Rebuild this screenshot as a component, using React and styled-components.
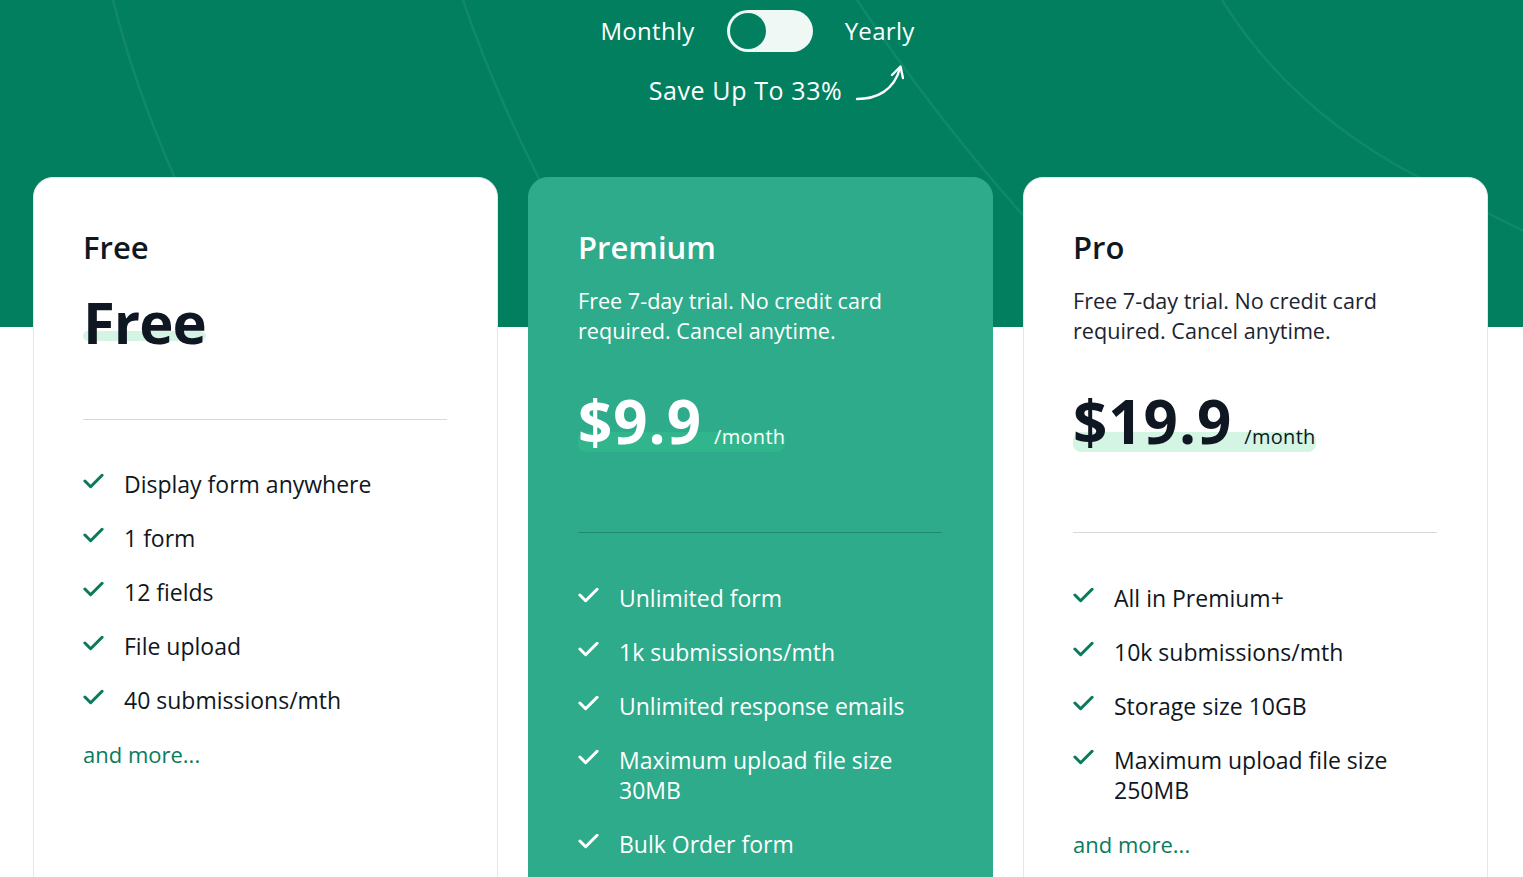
import React, { useState } from 'react';
import styled, { createGlobalStyle } from 'styled-components';

const GlobalStyle = createGlobalStyle`
  * { box-sizing: border-box; }
  html, body { margin: 0; padding: 0; }
  body {
    font-family: "Open Sans", "Liberation Sans", sans-serif;
    background: linear-gradient(to bottom, #017f5f 0, #017f5f 327px, #ffffff 327px);
    overflow: hidden;
  }
`;

const plans = [
  {
    name: 'Free',
    variant: 'light',
    price: 'Free',
    features: ['Display form anywhere', '1 form', '12 fields', 'File upload', '40 submissions/mth'],
    more: true,
  },
  {
    name: 'Premium',
    variant: 'featured',
    desc: 'Free 7-day trial. No credit card required. Cancel anytime.',
    price: '$9.9',
    period: '/month',
    features: [
      'Unlimited form',
      '1k submissions/mth',
      'Unlimited response emails',
      'Maximum upload file size 30MB',
      'Bulk Order form',
    ],
  },
  {
    name: 'Pro',
    variant: 'light',
    desc: 'Free 7-day trial. No credit card required. Cancel anytime.',
    price: '$19.9',
    period: '/month',
    features: ['All in Premium+', '10k submissions/mth', 'Storage size 10GB', 'Maximum upload file size 250MB'],
    more: true,
  },
];

const CheckIcon = ({ color }) => (
  <CheckSvg viewBox="0 0 22 16" fill="none">
    <polyline points="2,8 8,14 20,2" stroke={color} strokeWidth="3.2" strokeLinecap="round" strokeLinejoin="round" />
  </CheckSvg>
);

const CurvedArrow = () => (
  <ArrowSvg viewBox="0 0 50 42" fill="none">
    <path d="M3 37 C22 37 40 29 46 6" stroke="#fff" strokeWidth="2.4" strokeLinecap="round" />
    <path d="M38 13 L46.5 4.5 L49 16" stroke="#fff" strokeWidth="2.4" strokeLinecap="round" strokeLinejoin="round" />
  </ArrowSvg>
);

const BackgroundLines = () => (
  <LinesSvg viewBox="0 0 1523 327" preserveAspectRatio="none">
    <g stroke="rgba(255,255,255,0.07)" strokeWidth="2.5" fill="none">
      <path d="M113 0 Q150 150 250 327" />
      <path d="M463 0 Q510 140 620 327" />
      <path d="M857 0 Q930 110 1021 213 T1160 327" />
      <path d="M1222 0 Q1290 110 1420 178 T1530 232" />
    </g>
  </LinesSvg>
);

function App() {
  const [yearly, setYearly] = useState(false);

  return (
    <>
      <GlobalStyle />
      <Page>
        <BackgroundLines />
        <BillingRow>
          <BillingLabel>Monthly</BillingLabel>
          <Toggle $on={yearly} onClick={() => setYearly(!yearly)}>
            <Knob $on={yearly} />
          </Toggle>
          <BillingLabel>Yearly</BillingLabel>
        </BillingRow>
        <SaveRow>
          <SaveText>Save Up To 33%</SaveText>
          <CurvedArrow />
        </SaveRow>

        <Cards>
          {plans.map((plan) => {
            const featured = plan.variant === 'featured';
            const free = !plan.period;
            return (
              <Card key={plan.name} $featured={featured}>
                <PlanName $featured={featured}>{plan.name}</PlanName>
                {plan.desc && <PlanDesc $featured={featured}>{plan.desc}</PlanDesc>}
                <PriceRow $featured={featured} $free={free}>
                  <Price $featured={featured} $free={free}>{plan.price}</Price>
                  {plan.period && <Period $featured={featured}>{plan.period}</Period>}
                </PriceRow>
                <Divider $featured={featured} $free={free} />
                <FeatureList>
                  {plan.features.map((f) => (
                    <Feature key={f} $featured={featured}>
                      <CheckIcon color={featured ? '#ffffff' : '#0b7a5b'} />
                      <span>{f}</span>
                    </Feature>
                  ))}
                </FeatureList>
                {plan.more && <MoreLink href="#">and more...</MoreLink>}
              </Card>
            );
          })}
        </Cards>
      </Page>
    </>
  );
}

export default App;

const Page = styled.main`
  position: relative;
  width: 1523px;
  height: 877px;
  padding-top: 10px;
  overflow: hidden;
`;

const LinesSvg = styled.svg`
  position: absolute;
  left: 0;
  top: 0;
  width: 1523px;
  height: 327px;
  z-index: 0;
  pointer-events: none;
`;

const BillingRow = styled.div`
  position: relative;
  z-index: 1;
  display: flex;
  justify-content: center;
  align-items: center;
  gap: 32px;
  height: 42px;
  padding-right: 8px;
`;

const BillingLabel = styled.span`
  color: #ffffff;
  font-size: 24px;
  letter-spacing: 0.3px;
  line-height: 42px;
`;

const Toggle = styled.button`
  width: 86px;
  height: 42px;
  border: none;
  border-radius: 21px;
  background: #eff8f5;
  padding: 3px;
  display: flex;
  align-items: center;
  justify-content: ${(p) => (p.$on ? 'flex-end' : 'flex-start')};
  cursor: pointer;
`;

const Knob = styled.span`
  display: block;
  width: 36px;
  height: 36px;
  border-radius: 50%;
  background: #017f5f;
`;

const SaveRow = styled.div`
  position: relative;
  z-index: 1;
  display: flex;
  justify-content: center;
  align-items: flex-end;
  gap: 12px;
  margin-top: 3px;
  padding-left: 30px;
  height: 55px;
`;

const SaveText = styled.span`
  color: #ffffff;
  font-size: 25px;
  font-weight: 500;
  letter-spacing: 0.6px;
  line-height: 30px;
  margin-bottom: 5px;
`;

const ArrowSvg = styled.svg`
  width: 50px;
  height: 42px;
  margin-bottom: 6px;
`;

const Cards = styled.section`
  position: relative;
  z-index: 1;
  display: grid;
  grid-template-columns: repeat(3, 465px);
  gap: 30px;
  margin: 67px 0 0 33px;
`;

const Card = styled.article`
  background: ${(p) => (p.$featured ? '#2dab8a' : '#ffffff')};
  border: 1px solid ${(p) => (p.$featured ? '#2dab8a' : '#e4e6e8')};
  border-radius: 20px;
  padding: 49px 50px 60px 49px;
  min-height: 760px;
`;

const PlanName = styled.h2`
  margin: 0;
  font-size: 31px;
  line-height: 40px;
  font-weight: 600;
  color: ${(p) => (p.$featured ? '#ffffff' : '#0f1722')};
`;

const PlanDesc = styled.p`
  margin: 19px 0 0;
  font-size: 21.6px;
  line-height: 30px;
  color: ${(p) => (p.$featured ? '#ffffff' : '#1c2430')};
  max-width: 330px;
`;

const PriceRow = styled.div`
  position: relative;
  display: inline-flex;
  align-items: baseline;
  gap: 12px;
  margin-top: ${(p) => (p.$free ? '20px' : '40px')};

  &::before {
    content: '';
    position: absolute;
    left: 0;
    right: 0;
    bottom: ${(p) => (p.$free ? '16px' : '4px')};
    height: ${(p) => (p.$free ? '10px' : '20px')};
    border-radius: 8px;
    background: ${(p) => (p.$featured ? '#31b58d' : '#d4f5e3')};
    z-index: 0;
  }
`;

const Price = styled.span`
  position: relative;
  z-index: 1;
  font-size: ${(p) => (p.$free ? '58px' : '60px')};
  line-height: 70px;
  font-weight: 700;
  letter-spacing: ${(p) => (p.$free ? '-1px' : '1px')};
  color: ${(p) => (p.$featured ? '#ffffff' : '#0f1722')};
`;

const Period = styled.span`
  position: relative;
  z-index: 1;
  font-size: 20px;
  letter-spacing: 0.3px;
  color: ${(p) => (p.$featured ? '#ffffff' : '#0f1722')};
`;

const Divider = styled.hr`
  border: none;
  height: 1px;
  margin: ${(p) => (p.$free ? '62px 0 49px' : '76px 0 50px')};
  background: ${(p) => (p.$featured ? '#1f8a6c' : '#d6d8da')};
`;

const FeatureList = styled.ul`
  list-style: none;
  margin: 0;
  padding: 0;
  display: flex;
  flex-direction: column;
  gap: 24px;
`;

const Feature = styled.li`
  display: flex;
  align-items: flex-start;
  gap: 20px;
  font-size: 23px;
  line-height: 30px;
  color: ${(p) => (p.$featured ? '#ffffff' : '#0f1722')};
`;

const CheckSvg = styled.svg`
  flex: 0 0 21px;
  width: 21px;
  height: 16px;
  margin-top: 4px;
`;

const MoreLink = styled.a`
  display: block;
  margin-top: 24px;
  font-size: 22px;
  line-height: 30px;
  color: #0b7a5b;
  text-decoration: none;
`;
